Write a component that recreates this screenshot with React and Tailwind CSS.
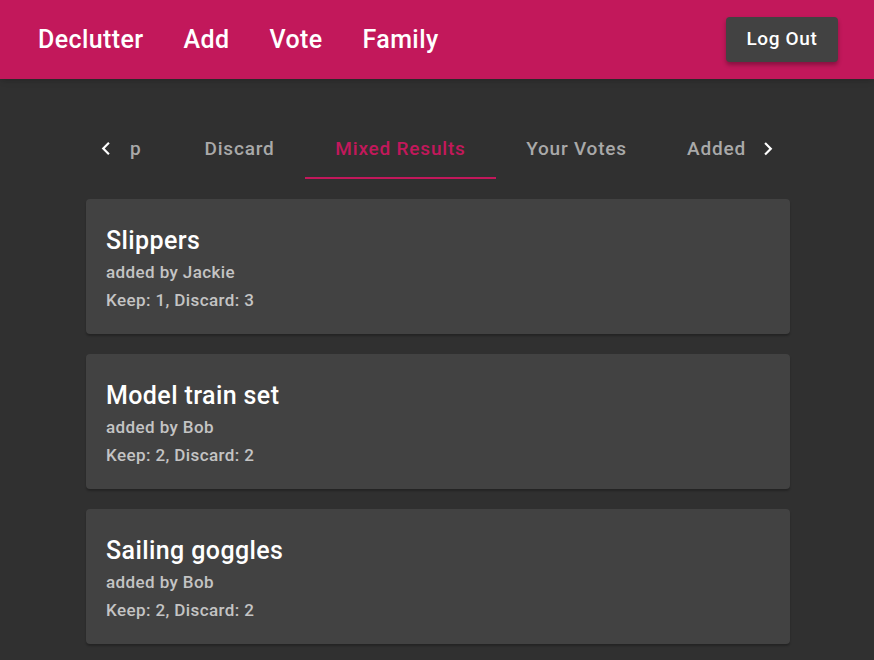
import React from "react";

const font = { fontFamily: "Roboto, 'Noto Sans', 'Liberation Sans', sans-serif" };

function ChevronLeft() {
  return (
    <svg width="26" height="26" viewBox="0 0 24 24" fill="#ffffff">
      <path d="M15.41 16.09l-4.58-4.59 4.58-4.59L14 5.5l-6 6 6 6z" />
    </svg>
  );
}

function ChevronRight() {
  return (
    <svg width="26" height="26" viewBox="0 0 24 24" fill="#ffffff">
      <path d="M8.59 16.34l4.58-4.59-4.58-4.59L10 5.75l6 6-6 6z" />
    </svg>
  );
}

const items = [
  { name: "Slippers", by: "Jackie", keep: 1, discard: 3 },
  { name: "Model train set", by: "Bob", keep: 2, discard: 2 },
  { name: "Sailing goggles", by: "Bob", keep: 2, discard: 2 },
];

export default function App() {
  return (
    <div className="min-h-[660px] w-full bg-[#303030]" style={font}>
      <header className="flex h-[79px] items-center justify-between bg-[#c2185b] pl-[38px] pr-[36px] shadow-md">
        <nav className="flex items-center gap-[40px] pt-[1px] text-[25px] font-medium tracking-[0.4px] text-white">
          <span>Declutter</span>
          <span>Add</span>
          <span>Vote</span>
          <span>Family</span>
        </nav>
        <button className="flex h-[45px] w-[112px] items-center justify-center rounded-[4px] bg-[#424242] text-[19px] font-medium tracking-[0.65px] text-white shadow-[0_3px_4px_rgba(0,0,0,0.3)]">
          Log Out
        </button>
      </header>

      <main className="ml-[86px] w-[704px] pt-[41px]">
        <div className="flex h-[59px] items-stretch">
          <div className="flex w-[40px] items-start justify-center pt-[16px]">
            <ChevronLeft />
          </div>
          <div className="flex flex-1 overflow-hidden text-[19px] font-medium leading-[22px] tracking-[0.8px]">
            <div className="flex w-[48px] shrink-0 justify-start pl-[4px] pt-[18px] text-[#a9a9a9]">p</div>
            <div className="flex w-[131px] shrink-0 justify-center pt-[18px] text-[#a9a9a9]">Discard</div>
            <div className="flex w-[191px] shrink-0 justify-center border-b-2 border-[#c2185b] pt-[18px] text-[#c2185b]">
              Mixed Results
            </div>
            <div className="flex w-[161px] shrink-0 justify-center pt-[18px] text-[#a9a9a9]">Your Votes</div>
            <div className="flex w-[119px] shrink-0 justify-center pt-[18px] text-[#a9a9a9]">Added</div>
          </div>
          <div className="mr-[2px] flex w-[40px] items-start justify-center pt-[16px]">
            <ChevronRight />
          </div>
        </div>

        <div className="mt-[20px] flex flex-col gap-[20px]">
          {items.map((it) => (
            <div
              key={it.name}
              className="h-[135px] rounded-[4px] bg-[#424242] px-[20px] pt-[26px] shadow-[0_2px_2px_rgba(0,0,0,0.25)]"
            >
              <div className="text-[25px] font-medium leading-[32px] tracking-[0.4px] text-white">{it.name}</div>
              <div className="mt-[1px] text-[17px] font-medium leading-[28px] tracking-[0.4px] text-[#c4c4c4]">
                added by {it.by}
              </div>
              <div className="text-[17px] font-medium leading-[28px] tracking-[0.4px] text-[#c4c4c4]">
                Keep: {it.keep}, Discard: {it.discard}
              </div>
            </div>
          ))}
        </div>
      </main>
    </div>
  );
}
